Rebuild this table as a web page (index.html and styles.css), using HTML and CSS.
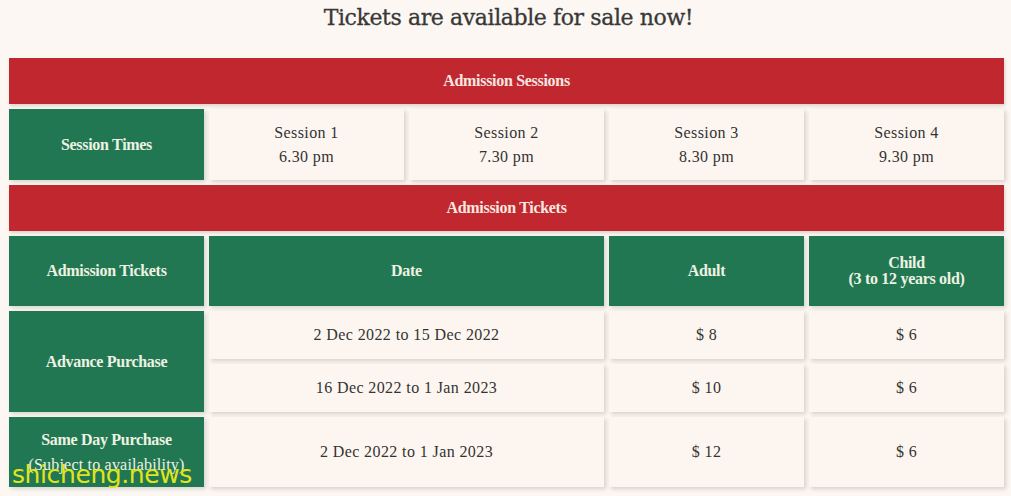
FILE: index.html
```html
<!doctype html>
<html>
  <head>
    <meta http-equiv="Content-type" content="text/html; charset=utf-8">
    <title>Tickets</title>
    <link rel="stylesheet" href="styles.css">
  </head>
  <body>

    <h1 class="title">Tickets are available for sale now!</h1>

    <table class="tickets">
      <tr class="bar">
        <th colspan="5">Admission Sessions</th>
      </tr>
      <tr class="tall sessions">
        <th class="green">Session Times</th>
        <td>Session 1<br>6.30 pm</td>
        <td>Session 2<br>7.30 pm</td>
        <td>Session 3<br>8.30 pm</td>
        <td>Session 4<br>9.30 pm</td>
      </tr>
      <tr class="bar">
        <th colspan="5">Admission Tickets</th>
      </tr>
      <tr class="tall">
        <th class="green">Admission Tickets</th>
        <th class="green" colspan="2">Date</th>
        <th class="green">Adult</th>
        <th class="green">Child<br>(3 to 12 years old)</th>
      </tr>
      <tr class="short">
        <th class="green" rowspan="2">Advance Purchase</th>
        <td colspan="2">2 Dec 2022 to 15 Dec 2022</td>
        <td>$ 8</td>
        <td>$ 6</td>
      </tr>
      <tr class="short">
        <td colspan="2">16 Dec 2022 to 1 Jan 2023</td>
        <td>$ 10</td>
        <td>$ 6</td>
      </tr>
      <tr class="tall">
        <th class="green">Same Day Purchase<span class="note">(Subject to availability)</span></th>
        <td colspan="2">2 Dec 2022 to 1 Jan 2023</td>
        <td>$ 12</td>
        <td>$ 6</td>
      </tr>
    </table>

    <div class="mark">shicheng.news</div>
  </body>
</html>
```

FILE: styles.css
```css
html, body {
  margin: 0;
  padding: 0;
}

body {
  background: #fcf7f2;
  font-family: "Liberation Serif", "DejaVu Serif", serif;
  color: #333;
  height: 496px;
  overflow: hidden;
  position: relative;
}

.title {
  margin: 0;
  padding-top: 5px;
  height: 48px;
  text-align: center;
  font-family: "DejaVu Serif", serif;
  font-size: 22px;
  font-weight: normal;
  color: #383838;
  letter-spacing: -0.4px;
  -webkit-text-stroke: 0.3px #383838;
  padding-left: 6px;
}

.tickets {
  margin: 0 4px;
  width: 1005px;
  table-layout: fixed;
  border-collapse: separate;
  border-spacing: 5px;
}

.tickets th,
.tickets td {
  text-align: center;
  vertical-align: middle;
  padding: 0 6px;
  font-size: 16px;
  line-height: 24px;
}

.tickets td {
  background: #fdf6f0;
  box-shadow: 2px 2px 4px rgba(90, 70, 60, 0.22);
  color: #333;
  letter-spacing: 0.4px;
}

.tickets th {
  font-weight: bold;
  font-size: 16px;
  line-height: 16px;
  letter-spacing: -0.3px;
}

.bar th {
  background: #c1272f;
  color: #f8e7e0;
  height: 46px;
  box-shadow: 1px 2px 3px rgba(90, 70, 60, 0.2);
}

.green {
  background: #227753;
  color: #eef2e2;
  box-shadow: 2px 2px 4px rgba(60, 80, 60, 0.2);
}

.tall th,
.tall td {
  height: 70px;
}

.sessions th,
.sessions td {
  height: 71px;
}

.short th,
.short td {
  height: 48px;
}

.note {
  display: block;
  margin-top: 9px;
  font-weight: normal;
  font-size: 16px;
  letter-spacing: 0.2px;
}

.mark {
  position: absolute;
  left: 12px;
  top: 460px;
  font-family: "DejaVu Sans", sans-serif;
  font-size: 25px;
  letter-spacing: -0.4px;
  color: #e2e41a;
}
```
